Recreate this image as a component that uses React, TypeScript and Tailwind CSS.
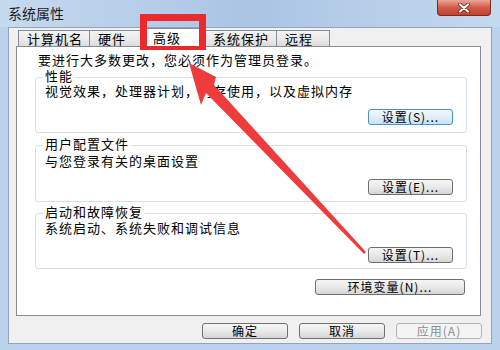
import React from 'react';

type BtnVariant = 'normal' | 'focused' | 'disabled';

function WinButton({
  children,
  width,
  variant = 'normal',
}: {
  children: React.ReactNode;
  width: string;
  variant?: BtnVariant;
}) {
  const styles: Record<BtnVariant, string> = {
    normal: 'border-[#707070] bg-linear-to-b from-[#f6f6f6] via-[#e9e9e9] to-[#d5d5d5] text-black',
    focused: 'border-[#4b8fc6] bg-linear-to-b from-[#f2f8fd] via-[#e1eff9] to-[#c9e2f5] text-black',
    disabled: 'border-[#b1b5b9] bg-[#f4f4f4] text-[#8d8d8d]',
  };
  return (
    <div
      className={`flex h-[16px] items-center justify-center rounded-[3px] border text-[12px] leading-none tracking-[1px] ${width} ${styles[variant]}`}
    >
      {children}
    </div>
  );
}

function Tab({ label, width, selected = false }: { label: string; width: string; selected?: boolean }) {
  if (selected) {
    return (
      <div
        className={`relative z-10 -mb-px flex h-[19px] items-center border border-b-0 border-[#898c95] bg-white pb-[2px] pl-[8px] text-[13px] leading-none tracking-[1px] ${width}`}
      >
        {label}
      </div>
    );
  }
  return (
    <div
      className={`flex h-[16px] items-center border border-b-0 border-[#898c95] bg-linear-to-b from-[#f3f3f3] via-[#ebebeb] to-[#dcdcdc] pl-[8px] text-[13px] leading-none tracking-[1px] ${width}`}
    >
      {label}
    </div>
  );
}

function Group({
  title,
  text,
  button,
  height,
  textGap,
  gap,
  className = '',
  focused = false,
}: {
  title: string;
  text: string;
  button: string;
  height: string;
  textGap: string;
  gap: string;
  className?: string;
  focused?: boolean;
}) {
  return (
    <fieldset className={`rounded-[3px] border border-[#d5dfe5] pl-[9px] pr-[13px] ${height} ${className}`}>
      <legend className="-ml-[2px] px-[2px] pb-[4px] text-[13px] leading-[13px] tracking-[1px]">{title}</legend>
      <p className={`h-[13px] text-[13px] leading-[13px] tracking-[1px] ${textGap}`}>{text}</p>
      <div className={`flex justify-end ${gap}`}>
        <WinButton width="w-[85px]" variant={focused ? 'focused' : 'normal'}>
          {button}
        </WinButton>
      </div>
    </fieldset>
  );
}

export default function App() {
  return (
    <div className="relative h-[350px] w-[500px] overflow-hidden bg-[#bad2eb] font-['Noto_Sans_CJK_SC','Noto_Sans',sans-serif] text-black">
      {/* title bar */}
      <div className="flex h-[27px] items-start justify-between bg-linear-to-r from-[#c6daf0] via-[#aac4e3] to-[#c4d9ef]">
        <div className="pl-[8px] pt-[5px] text-[14px] leading-[16px] text-[#1c1c1c]">系统属性</div>
        <div className="mr-[9px] flex h-[16px] w-[54px] items-center justify-center rounded-b-[4px] border border-t-0 border-[#7a2b22] bg-linear-to-b from-[#e8a597] via-[#d35a4a] to-[#c0402f]">
          <svg width="14" height="10" viewBox="0 0 14 10">
            <path d="M3 1.5 L11 8.5 M11 1.5 L3 8.5" stroke="#5a1d16" strokeWidth="3.6" strokeLinecap="round" />
            <path d="M3 1.5 L11 8.5 M11 1.5 L3 8.5" stroke="#ffffff" strokeWidth="2.2" strokeLinecap="round" />
          </svg>
        </div>
      </div>

      {/* client area */}
      <div className="ml-[8px] mr-[8px] h-[317px] border border-[#8ea5c2] bg-[#f0f0f0]">
        <div className="flex h-[18px] items-end pl-[9px]">
          <Tab label="计算机名" width="w-[72px]" />
          <Tab label="硬件" width="w-[53px] -ml-px" />
          <Tab label="高级" width="w-[61px] ml-[2px]" selected />
          <Tab label="系统保护" width="w-[73px] -ml-px" />
          <Tab label="远程" width="w-[54px] -ml-px" />
        </div>

        <div className="ml-[7px] h-[270px] w-[465px] border border-[#898c95] bg-white">
          <div className="pl-[18px] pr-[13px] pt-[6px]">
            <p className="ml-[3px] h-[14px] text-[13px] leading-[14px] tracking-[1px]">
              要进行大多数更改，您必须作为管理员登录。
            </p>
            <Group
              title="性能"
              text="视觉效果，处理器计划，内存使用，以及虚拟内存"
              button="设置(S)..."
              height="h-[64px]"
              textGap="-mt-[2px]"
              gap="mt-[12px]"
              className="mt-[2px]"
              focused
            />
            <Group
              title="用户配置文件"
              text="与您登录有关的桌面设置"
              button="设置(E)..."
              height="h-[65px]"
              textGap="mt-0"
              gap="mt-[12px]"
              className="mt-[4px]"
            />
            <Group
              title="启动和故障恢复"
              text="系统启动、系统失败和调试信息"
              button="设置(T)..."
              height="h-[64px]"
              textGap="-mt-[1px]"
              gap="mt-[13px]"
              className="mt-[3px]"
            />
            <div className="mt-[10px] flex justify-end pr-[2px]">
              <WinButton width="w-[150px]">环境变量(N)...</WinButton>
            </div>
          </div>
        </div>

        <div className="mt-[7px] flex justify-end gap-[11px] pr-[9px]">
          <WinButton width="w-[86px]">确定</WinButton>
          <WinButton width="w-[86px]">取消</WinButton>
          <WinButton width="w-[86px]" variant="disabled">
            应用(A)
          </WinButton>
        </div>
      </div>

      {/* annotation: red box around the tab */}
      <div className="pointer-events-none absolute left-[140px] top-[14px] z-20 h-[36px] w-[66px] border-x-[7px] border-t-[7px] border-b-[4px] border-[#ec2a2d]" />

      {/* annotation: red arrow */}
      <svg className="pointer-events-none absolute left-0 top-0 z-20" width="500" height="350" viewBox="0 0 500 350">
        <polygon
          points="189,63 216,77 214,85 366,252 364,254 206,93 201,105"
          fill="#ee3b3b"
        />
      </svg>
    </div>
  );
}
